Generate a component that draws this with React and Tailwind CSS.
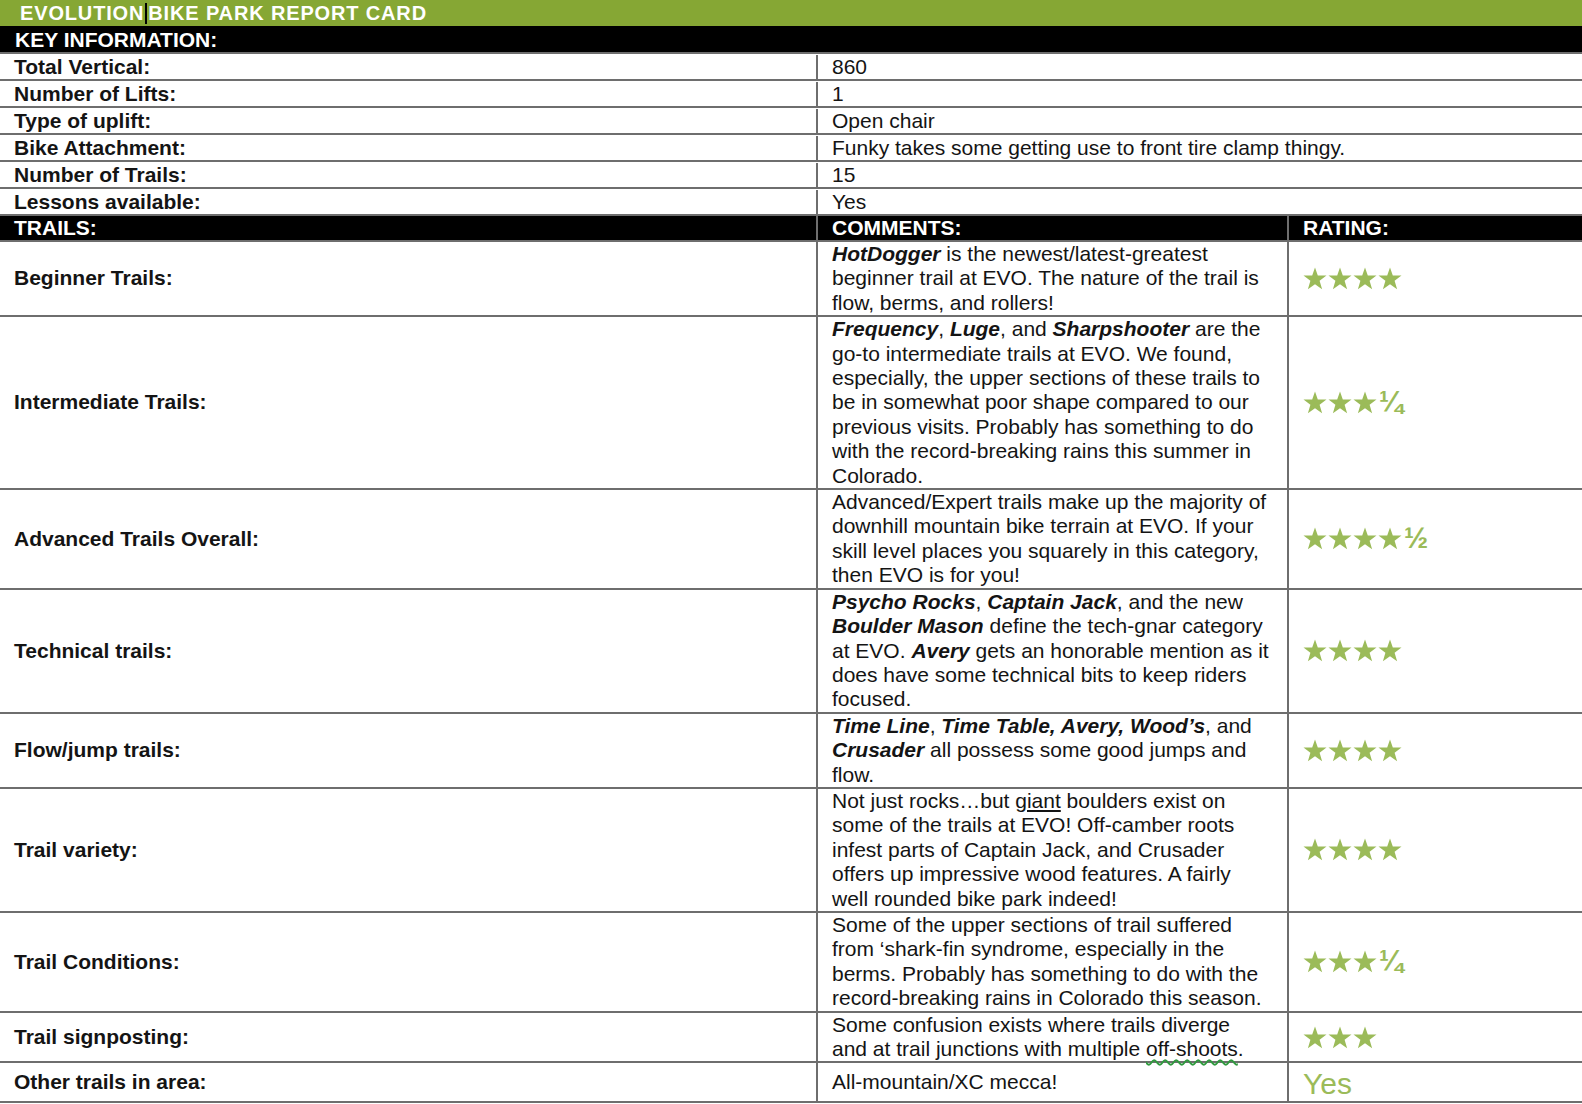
import React from "react";

const line = "border-[#6e6e6e]";

function Star() {
  return (
    <svg width="24" height="23" viewBox="0 0 24 23" className="shrink-0">
      <polygon
        points="12,0.5 14.8,8.4 23.5,8.6 16.6,13.8 19.1,22.3 12,17.3 4.9,22.3 7.4,13.8 0.5,8.6 9.2,8.4"
        fill="#9bbb59"
      />
    </svg>
  );
}

function Stars({ n, frac }) {
  return (
    <div className="flex items-center gap-[1px]">
      {Array.from({ length: n }).map((_, i) => (
        <Star key={i} />
      ))}
      {frac && (
        <span className="ml-[1px] text-[29px] font-bold leading-none text-[#9bbb59]">{frac}</span>
      )}
    </div>
  );
}

function B({ children }) {
  return <span className="font-bold italic">{children}</span>;
}

function KeyRow({ label, value }) {
  return (
    <div className={`flex h-[27px] pt-[1px] border-b-2 ${line}`}>
      <div className={`w-[818px] shrink-0 border-r-2 ${line} pl-[14px] font-bold`}>{label}</div>
      <div className="flex-1 pl-[14px]">{value}</div>
    </div>
  );
}

function TrailRow({ label, rating, children, tall }) {
  return (
    <div className={`flex border-b-2 ${line} ${tall ? "min-h-[40px]" : ""}`}>
      <div className={`w-[818px] shrink-0 border-r-2 ${line} pl-[14px] flex items-center font-bold`}>
        {label}
      </div>
      <div className={`w-[471px] shrink-0 border-r-2 ${line} pl-[14px] whitespace-nowrap flex flex-col justify-center`}>
        {children}
      </div>
      <div className="flex-1 pl-[14px] flex items-center">{rating}</div>
    </div>
  );
}

export default function App() {
  return (
    <div className="w-[1582px] min-h-[1104px] bg-white text-[#141414] font-['Liberation_Sans',Arial,sans-serif] text-[21px] leading-[24.4px]">
      {/* Title bar */}
      <div className="h-[26px] bg-[#86a734] pl-[20px] flex items-center text-white font-bold text-[20px] tracking-[0.85px]">
        <span>EVOLUTION</span>
        <span className="inline-block w-[2px] h-[21px] bg-black mx-[1px]" />
        <span>BIKE PARK REPORT CARD</span>
      </div>

      {/* Key information */}
      <div className={`h-[28px] bg-black text-white font-bold pl-[15px] pt-[2px] border-b-2 ${line} flex items-center`}>
        KEY INFORMATION:
      </div>
      <KeyRow label="Total Vertical:" value="860" />
      <KeyRow label="Number of Lifts:" value="1" />
      <KeyRow label="Type of uplift:" value="Open chair" />
      <KeyRow label="Bike Attachment:" value="Funky takes some getting use to front tire clamp thingy." />
      <KeyRow label="Number of Trails:" value="15" />
      <KeyRow label="Lessons available:" value="Yes" />

      {/* Trails header */}
      <div className={`flex h-[26px] bg-black text-white font-bold border-b-2 ${line}`}>
        <div className={`w-[818px] shrink-0 border-r-2 ${line} pl-[14px] flex items-center`}>TRAILS:</div>
        <div className={`w-[471px] shrink-0 border-r-2 ${line} pl-[14px] flex items-center`}>COMMENTS:</div>
        <div className="flex-1 pl-[14px] flex items-center">RATING:</div>
      </div>

      <TrailRow label="Beginner Trails:" rating={<Stars n={4} />}>
        <div><B>HotDogger</B> is the newest/latest-greatest</div>
        <div>beginner trail at EVO. The nature of the trail is</div>
        <div>flow, berms, and rollers!</div>
      </TrailRow>

      <TrailRow label="Intermediate Trails:" rating={<Stars n={3} frac="¼" />}>
        <div><B>Frequency</B>, <B>Luge</B>, and <B>Sharpshooter</B> are the</div>
        <div>go-to intermediate trails at EVO. We found,</div>
        <div>especially, the upper sections of these trails to</div>
        <div>be in somewhat poor shape compared to our</div>
        <div>previous visits. Probably has something to do</div>
        <div>with the record-breaking rains this summer in</div>
        <div>Colorado.</div>
      </TrailRow>

      <TrailRow label="Advanced Trails Overall:" rating={<Stars n={4} frac="½" />}>
        <div>Advanced/Expert trails make up the majority of</div>
        <div>downhill mountain bike terrain at EVO. If your</div>
        <div>skill level places you squarely in this category,</div>
        <div>then EVO is for you!</div>
      </TrailRow>

      <TrailRow label="Technical trails:" rating={<Stars n={4} />}>
        <div><B>Psycho Rocks</B>, <B>Captain Jack</B>, and the new</div>
        <div><B>Boulder Mason</B> define the tech-gnar category</div>
        <div>at EVO. <B>Avery</B> gets an honorable mention as it</div>
        <div>does have some technical bits to keep riders</div>
        <div>focused.</div>
      </TrailRow>

      <TrailRow label="Flow/jump trails:" rating={<Stars n={4} />}>
        <div><B>Time Line</B>, <B>Time Table, Avery, Wood’s</B>, and</div>
        <div><B>Crusader</B> all possess some good jumps and</div>
        <div>flow.</div>
      </TrailRow>

      <TrailRow label="Trail variety:" rating={<Stars n={4} />}>
        <div>Not just rocks…but <span className="underline underline-offset-2">giant</span> boulders exist on</div>
        <div>some of the trails at EVO! Off-camber roots</div>
        <div>infest parts of Captain Jack, and Crusader</div>
        <div>offers up impressive wood features. A fairly</div>
        <div>well rounded bike park indeed!</div>
      </TrailRow>

      <TrailRow label="Trail Conditions:" rating={<Stars n={3} frac="¼" />}>
        <div>Some of the upper sections of trail suffered</div>
        <div>from ‘shark-fin syndrome, especially in the</div>
        <div>berms. Probably has something to do with the</div>
        <div>record-breaking rains in Colorado this season.</div>
      </TrailRow>

      <TrailRow label="Trail signposting:" rating={<Stars n={3} />}>
        <div>Some confusion exists where trails diverge</div>
        <div>
          and at trail junctions with multiple{" "}
          <span className="underline decoration-wavy decoration-[#2f9a3e] decoration-[1.5px] underline-offset-[3px]">off-shoots</span>.
        </div>
      </TrailRow>

      <TrailRow
        tall
        label="Other trails in area:"
        rating={<span className="text-[30px] leading-none pt-[3px] text-[#9bbb59]">Yes</span>}
      >
        <div>All-mountain/XC mecca!</div>
      </TrailRow>
    </div>
  );
}
